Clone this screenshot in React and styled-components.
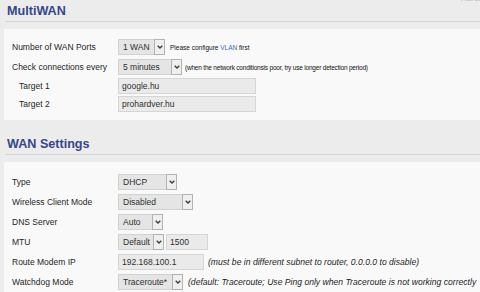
import React from "react";
import styled, { createGlobalStyle } from "styled-components";

const Global = createGlobalStyle`
  html, body { margin: 0; padding: 0; background: #ececec; overflow: hidden; }
  body { font-family: "Liberation Sans", Arial, sans-serif; color: #1e1e1e; }
`;

const Page = styled.div`
  position: relative;
  width: 480px;
  height: 292px;
  padding-left: 4px;
  box-sizing: border-box;
  overflow: hidden;
`;

const Corner = styled.span`
  position: absolute;
  top: -6px;
  left: 461px;
  font-size: 8px;
  color: #b8b8b8;
  white-space: nowrap;
`;

const Section = styled.section`
  margin-top: ${(p) => p.$top || 0}px;
`;

const Heading = styled.h2`
  margin: 0 0 7px 1px;
  padding: 3px 0 2px 2px;
  font-size: 12.6px;
  line-height: 16px;
  font-weight: bold;
  color: #34478a;
  border-bottom: 1px solid #d3d3d3;
`;

const Panel = styled.div`
  background: #f9f9f9;
  padding: ${(p) => p.$pt}px 0 7px 8px;
  margin-right: -20px;
`;

const Row = styled.div`
  display: grid;
  grid-template-columns: 106px 1fr;
  align-items: center;
  height: ${(p) => p.$h || 20}px;
`;

const Label = styled.div`
  font-size: 8.5px;
  padding-left: ${(p) => (p.$indent ? 7 : 0)}px;
  white-space: nowrap;
`;

const Controls = styled.div`
  display: flex;
  align-items: center;
  gap: ${(p) => p.$gap ?? 5}px;
`;

const SelectBox = styled.div`
  display: flex;
  align-items: stretch;
  box-sizing: border-box;
  width: ${(p) => p.$w}px;
  height: 16px;
  background: #e5e5e5;
  border: 1px solid #d2d2d2;
`;

const SelectText = styled.span`
  flex: 1;
  font-size: 8.5px;
  line-height: 14px;
  padding-left: 4px;
  color: #2e2e2e;
  white-space: nowrap;
  overflow: hidden;
`;

const ArrowBox = styled.span`
  width: 11px;
  margin: -1px -1px -1px 0;
  box-sizing: border-box;
  border: 1px solid #b3b3b3;
  background: #efefef;
  display: flex;
  align-items: center;
  justify-content: center;
`;

const TextBox = styled.div`
  box-sizing: border-box;
  width: ${(p) => p.$w}px;
  height: 16px;
  background: #eaeaea;
  border: 1px solid #d5d5d5;
  font-size: 8.5px;
  line-height: 14px;
  padding-left: 3px;
  color: #2e2e2e;
  white-space: nowrap;
`;

const SmallHint = styled.span`
  font-size: 6.5px;
  color: #111;
  white-space: nowrap;
  letter-spacing: ${(p) => p.$ls || 0}px;
`;

const ItalicHint = styled.span`
  font-size: 8.6px;
  font-style: italic;
  color: #1e1e1e;
  white-space: nowrap;
`;

const Link = styled.span`
  color: #2f6fb8;
`;

const Chevron = () => (
  <svg width="6" height="4" viewBox="0 0 6 4">
    <polyline points="0.7,0.7 3,3 5.3,0.7" fill="none" stroke="#3a3a3a" strokeWidth="1.3" />
  </svg>
);

const Select = ({ w, children }) => (
  <SelectBox $w={w}>
    <SelectText>{children}</SelectText>
    <ArrowBox>
      <Chevron />
    </ArrowBox>
  </SelectBox>
);

export default function App() {
  return (
    <Page>
      <Global />
      <Corner>Hardware</Corner>
      <Section>
        <Heading>MultiWAN</Heading>
        <Panel $pt={8}>
          <Row>
            <Label>Number of WAN Ports</Label>
            <Controls>
              <Select w={47}>1 WAN</Select>
              <SmallHint>
                Please configure <Link>VLAN</Link> first
              </SmallHint>
            </Controls>
          </Row>
          <Row>
            <Label>Check connections every</Label>
            <Controls $gap={3}>
              <Select w={64}>5 minutes</Select>
              <SmallHint $ls={-0.2}>
                (when the network conditionsis poor, try use longer detection period)
              </SmallHint>
            </Controls>
          </Row>
          <Row $h={18}>
            <Label $indent>Target 1</Label>
            <Controls>
              <TextBox $w={138}>google.hu</TextBox>
            </Controls>
          </Row>
          <Row $h={18}>
            <Label $indent>Target 2</Label>
            <Controls>
              <TextBox $w={138}>prohardver.hu</TextBox>
            </Controls>
          </Row>
        </Panel>
      </Section>
      <Section $top={13}>
        <Heading>WAN Settings</Heading>
        <Panel $pt={10}>
          <Row>
            <Label>Type</Label>
            <Controls>
              <Select w={59}>DHCP</Select>
            </Controls>
          </Row>
          <Row>
            <Label>Wireless Client Mode</Label>
            <Controls>
              <Select w={75}>Disabled</Select>
            </Controls>
          </Row>
          <Row>
            <Label>DNS Server</Label>
            <Controls>
              <Select w={45}>Auto</Select>
            </Controls>
          </Row>
          <Row>
            <Label>MTU</Label>
            <Controls $gap={2}>
              <Select w={46}>Default</Select>
              <TextBox $w={42}>1500</TextBox>
            </Controls>
          </Row>
          <Row>
            <Label>Route Modem IP</Label>
            <Controls $gap={4}>
              <TextBox $w={86}>192.168.100.1</TextBox>
              <ItalicHint>(must be in different subnet to router, 0.0.0.0 to disable)</ItalicHint>
            </Controls>
          </Row>
          <Row>
            <Label>Watchdog Mode</Label>
            <Controls>
              <Select w={65}>Traceroute*</Select>
              <ItalicHint>
                (default: Traceroute; Use Ping only when Traceroute is not working correctly
              </ItalicHint>
            </Controls>
          </Row>
        </Panel>
      </Section>
    </Page>
  );
}
